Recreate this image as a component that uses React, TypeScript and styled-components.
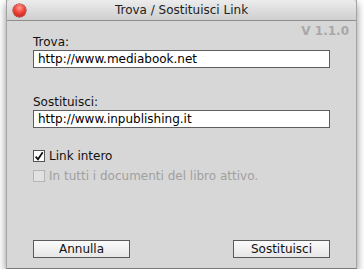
import React from 'react';
import styled, { createGlobalStyle } from 'styled-components';

const GlobalStyle = createGlobalStyle`
  html, body {
    margin: 0;
    padding: 0;
    background: #ffffff;
  }
  body {
    font-family: "DejaVu Sans", "Liberation Sans", sans-serif;
  }
`;

const App: React.FC = () => {
  return (
    <>
      <GlobalStyle />
      <Window>
        <TitleBar>
          <CloseDot />
          <Title>Trova / Sostituisci Link</Title>
        </TitleBar>
        <Content>
          <Version>V 1.1.0</Version>
          <Label $top={-3}>Trova:</Label>
          <Field>http://www.mediabook.net</Field>
          <Label $top={26}>Sostituisci:</Label>
          <Field>http://www.inpublishing.it</Field>
          <Options>
            <Check>
              <Box>
                <svg width="11" height="11" viewBox="0 0 11 11">
                  <path d="M1.8 5.6 L4.4 8.6 L9.6 0.8" fill="none" stroke="#111" strokeWidth="1.9" />
                </svg>
              </Box>
              <span>Link intero</span>
            </Check>
            <Check $disabled>
              <Box $disabled />
              <span>In tutti i documenti del libro attivo.</span>
            </Check>
          </Options>
          <Buttons>
            <Button>Annulla</Button>
            <Button>Sostituisci</Button>
          </Buttons>
        </Content>
      </Window>
    </>
  );
};

export default App;

const Window = styled.div`
  margin-left: 6px;
  width: 351px;
  height: 269px;
  display: flex;
  flex-direction: column;
  background: #d7d7d7;
  box-shadow: 0 4px 8px rgba(0, 0, 0, 0.45);
  border-left: 1px solid #a4a4a4;
  border-right: 1px solid #a4a4a4;
  border-bottom: 1px solid #7a7a7a;
  box-sizing: border-box;
`;

const TitleBar = styled.div`
  height: 21px;
  position: relative;
  display: flex;
  align-items: center;
  justify-content: center;
  background: linear-gradient(#ececec, #cfcfcf);
  border-bottom: 1px solid #8e8e8e;
  box-sizing: border-box;
  border-radius: 4px 4px 0 0;
`;

const CloseDot = styled.div`
  position: absolute;
  left: 6px;
  top: 4px;
  width: 13px;
  height: 13px;
  border-radius: 50%;
  background: radial-gradient(circle at 50% 30%, #ff9c94 0%, #f0433a 45%, #b8140f 100%);
  box-shadow: 0 0 0 0.5px #8a1a15;
`;

const Title = styled.div`
  font-size: 12px;
  color: #222;
`;

const Content = styled.div`
  flex: 1;
  display: flex;
  flex-direction: column;
  padding: 0 26px 0 26px;
`;

const Version = styled.div`
  align-self: flex-end;
  margin-right: -19px;
  margin-top: 4px;
  font-size: 12px;
  font-weight: bold;
  color: #a8a8a8;
  height: 12px;
  line-height: 12px;
`;

const Label = styled.div<{ $top?: number }>`
  margin-top: ${p => p.$top ?? 0}px;
  font-size: 12px;
  color: #111;
  height: 16px;
  line-height: 16px;
`;

const Field = styled.div`
  height: 18px;
  line-height: 16px;
  box-sizing: border-box;
  background: #fff;
  border: 1px solid #5e5e5e;
  padding: 0 4px;
  font-size: 12px;
  color: #000;
`;

const Options = styled.div`
  display: flex;
  flex-direction: column;
  gap: 6px;
  margin-top: 21px;
`;

const Check = styled.div<{ $disabled?: boolean }>`
  display: flex;
  align-items: center;
  gap: 4px;
  font-size: 12px;
  height: 14px;
  color: ${p => (p.$disabled ? '#a0a0a0' : '#111')};
`;

const Box = styled.div<{ $disabled?: boolean }>`
  width: 12px;
  height: 12px;
  box-sizing: border-box;
  background: ${p => (p.$disabled ? '#e2e2e2' : '#fff')};
  border: 1px solid ${p => (p.$disabled ? '#b4b4b4' : '#555')};
  display: flex;
  align-items: center;
  justify-content: center;
`;

const Buttons = styled.div`
  margin-top: auto;
  margin-bottom: 10px;
  display: flex;
  justify-content: space-between;
`;

const Button = styled.div`
  width: 97px;
  height: 18px;
  box-sizing: border-box;
  border: 1px solid #5a5a5a;
  background: linear-gradient(#fbfbfb, #e6e6e6);
  display: flex;
  align-items: center;
  justify-content: center;
  font-size: 12px;
  color: #111;
`;
